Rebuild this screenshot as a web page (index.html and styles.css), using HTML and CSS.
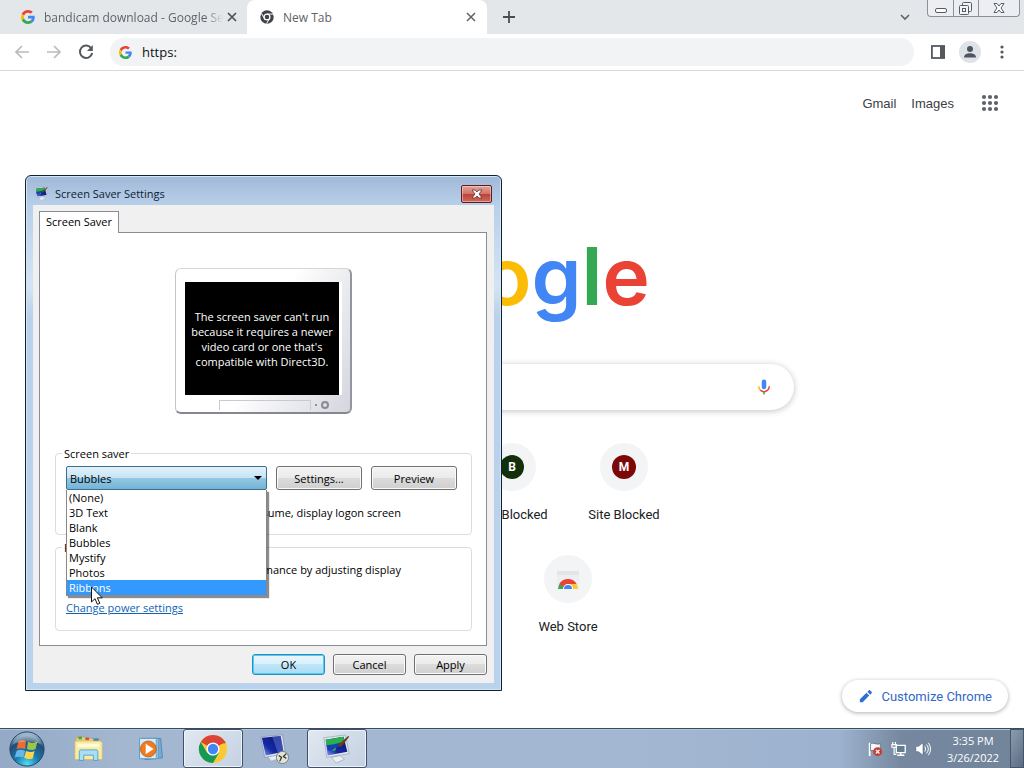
FILE: index.html
```html
<!DOCTYPE html>
<html lang="en">
<head>
<meta charset="utf-8">
<title>New Tab</title>
<link rel="stylesheet" href="styles.css">
</head>
<body>
<svg class="defs" aria-hidden="true">
  <defs>
    <symbol id="g-mark" viewBox="0 0 48 48">
      <path fill="#ea4335" d="M24 9.500c3.500 0 6.700 1.200 9.200 3.600l6.900-6.900C35.900 2.400 30.500 0 24 0 14.600 0 6.500 5.400 2.600 13.200l8 6.200C12.400 13.700 17.700 9.500 24 9.500z"/>
      <path fill="#4285f4" d="M47 24.500c0-1.600-.2-3.100-.4-4.500H24v9h12.900c-.6 3-2.300 5.500-4.800 7.200l7.700 6C44.400 38 47 31.800 47 24.500z"/>
      <path fill="#fbbc05" d="M10.500 28.600a14.500 14.500 0 0 1 0-9.200l-8-6.200a24 24 0 0 0 0 21.600z"/>
      <path fill="#34a853" d="M24 48c6.500 0 11.900-2.100 15.900-5.800l-7.700-6c-2.200 1.400-4.900 2.300-8.200 2.300-6.300 0-11.600-4.200-13.500-9.900l-8 6.200C6.500 42.600 14.600 48 24 48z"/>
    </symbol>
    <linearGradient id="blue-screen" x1="0" y1="1" x2="1" y2="0">
      <stop offset="0" stop-color="#8fa4ee"/><stop offset=".35" stop-color="#1529a8"/><stop offset="1" stop-color="#0b1560"/>
    </linearGradient>
    <symbol id="display" viewBox="0 0 32 32">
      <path d="M10 25l9-2 5 4-9 4z" fill="#e8edf4" stroke="#8b9ab0" stroke-width=".6"/>
      <path d="M2 4l23-3 4 20-24 4z" fill="#dfe6f0" stroke="#8793a8" stroke-width=".6"/>
      <path d="M4 6l19-3 4 16-21 4z" fill="url(#blue-screen)"/>
      <path d="M4 6l19-3 1 6-8 3-2 6-5-1 2-4-6 1z" fill="#28b24a"/>
      <path d="M5 12l8-1 7-2-3 4-8 5-3-1z" fill="#193dbb"/>
      <path d="M18 11l10-9 1 1-8 10-4 1z" fill="#6a3b1d"/>
    </symbol>
  </defs>
</svg>

<main class="browser">
  <header class="tab-strip">
    <div class="tab">
      <svg class="favicon" aria-hidden="true"><use href="#g-mark"/></svg>
      <span class="tab-title tab-title-fade">bandicam download - Google Search</span>
      <button class="icon-button tab-close" aria-label="Close tab"><svg viewBox="0 0 10 10"><path d="M1 1l8 8M9 1l-8 8" stroke="#4c5054" stroke-width="1.700"/></svg></button>
    </div>
    <div class="tab tab-active">
      <svg class="favicon" viewBox="0 0 24 24" aria-hidden="true">
        <circle cx="12" cy="12" r="11.500" fill="#3f4347"/>
        <circle cx="12" cy="12" r="5" fill="#3f4347" stroke="#fff" stroke-width="2.200"/>
        <path d="M12 7h10.500M7.600 14.500L2.400 5.600M16.400 14.500L11.300 23.400" stroke="#fff" stroke-width="1.700"/>
      </svg>
      <span class="tab-title">New Tab</span>
      <button class="icon-button tab-close" aria-label="Close tab"><svg viewBox="0 0 10 10"><path d="M1 1l8 8M9 1l-8 8" stroke="#5f6368" stroke-width="1.500"/></svg></button>
    </div>
    <button class="icon-button new-tab" aria-label="New tab"><svg viewBox="0 0 12 12"><path d="M6 0v12M0 6h12" stroke="#4a4e52" stroke-width="1.800"/></svg></button>
    <button class="icon-button tab-search" aria-label="Search tabs"><svg viewBox="0 0 12 12"><path d="M2 4l4 4 4-4" fill="none" stroke="#5f6368" stroke-width="1.600"/></svg></button>
    <div class="window-controls">
      <button aria-label="Minimize"><svg viewBox="0 0 24 16"><rect x="6.500" y="8.500" width="11" height="4" rx="1.500" fill="#fff" stroke="#555c66"/></svg></button>
      <button aria-label="Restore"><svg viewBox="0 0 24 16"><g fill="#f4f5f7" stroke="#555c66"><rect x="8.500" y="2.500" width="9" height="9" rx="1"/><rect x="5.500" y="5.500" width="9" height="9" rx="1"/><rect x="8.500" y="8.500" width="3" height="3"/></g></svg></button>
      <button class="wide" aria-label="Close"><svg viewBox="0 0 24 16"><path d="M7 3.500h3l2 2.500 2-2.500h3l-3 4.500 3 4.500h-3l-2-2.500-2 2.500H7l3-4.500z" fill="#fff" stroke="#555c66"/></svg></button>
    </div>
  </header>

  <nav class="toolbar" aria-label="Browser toolbar">
    <button class="icon-button" aria-label="Back"><svg viewBox="0 0 16 16"><path d="M15 8H2M8 2L2 8l6 6" fill="none" stroke="#b9bbbe" stroke-width="1.700"/></svg></button>
    <button class="icon-button" aria-label="Forward"><svg viewBox="0 0 16 16"><path d="M1 8h13M8 2l6 6-6 6" fill="none" stroke="#b9bbbe" stroke-width="1.700"/></svg></button>
    <button class="icon-button" aria-label="Reload"><svg viewBox="0 0 16 16"><path d="M13.300 4.300A6.200 6.200 0 1 0 14.200 9" fill="none" stroke="#55595e" stroke-width="2"/><path d="M14.800 1v6H9z" fill="#55595e"/></svg></button>
    <label class="omnibox">
      <svg class="favicon" aria-hidden="true"><use href="#g-mark"/></svg>
      <input type="text" value="https:" aria-label="Address">
    </label>
    <button class="icon-button" aria-label="Side panel"><svg viewBox="0 0 16 16"><rect x="1.900" y="2" width="12.200" height="12" fill="#fff" stroke="#55595e" stroke-width="1.800"/><path d="M10 2h4v12h-4z" fill="#55595e"/></svg></button>
    <button class="icon-button profile" aria-label="Profile"><svg viewBox="0 0 16 16"><circle cx="8" cy="5" r="3" fill="#4e5560"/><path d="M2 13.500c0-3 3-4.200 6-4.200s6 1.200 6 4.200z" fill="#4e5560"/></svg></button>
    <button class="icon-button" aria-label="Menu"><svg viewBox="0 0 16 16" fill="#55595e"><circle cx="8" cy="3" r="1.600"/><circle cx="8" cy="8" r="1.600"/><circle cx="8" cy="13" r="1.600"/></svg></button>
  </nav>

  <section class="page">
    <nav class="page-links" aria-label="Google services">
      <a href="#gmail">Gmail</a>
      <a href="#images">Images</a>
      <button class="icon-button apps" aria-label="Google apps"><svg viewBox="0 0 18 18" fill="#5f6368"><circle cx="3" cy="3" r="2.100"/><circle cx="9" cy="3" r="2.100"/><circle cx="15" cy="3" r="2.100"/><circle cx="3" cy="9" r="2.100"/><circle cx="9" cy="9" r="2.100"/><circle cx="15" cy="9" r="2.100"/><circle cx="3" cy="15" r="2.100"/><circle cx="9" cy="15" r="2.100"/><circle cx="15" cy="15" r="2.100"/></svg></button>
    </nav>
    <h1 class="logo"><span class="blue">G</span><span class="red">o</span><span class="yellow">o</span><span class="blue">g</span><span class="green">l</span><span class="red">e</span></h1>
    <div class="search">
      <input type="text" aria-label="Search">
      <button class="icon-button" aria-label="Search by voice"><svg viewBox="0 0 24 24"><rect x="9" y="2" width="6" height="13" rx="3" fill="#4285f4"/><path d="M5 11c0 2 .8 3.700 2 5" fill="none" stroke="#fbbc05" stroke-width="2"/><path d="M7 16c3 3 7 3 10 0 1.200-1.200 2-3 2-5" fill="none" stroke="#ea4335" stroke-width="2"/><path d="M12 18v4" stroke="#34a853" stroke-width="2"/></svg></button>
    </div>
    <div class="tiles">
      <div class="tile"><span class="tile-icon"></span></div>
      <a class="tile" href="#b"><span class="tile-icon"><b class="badge badge-green">B</b></span><span>Site Blocked</span></a>
      <a class="tile" href="#m"><span class="tile-icon"><b class="badge badge-red">M</b></span><span>Site Blocked</span></a>
      <div class="tile"><span class="tile-icon"></span></div>
      <a class="tile" href="#store"><span class="tile-icon"><svg class="store" viewBox="0 0 24 24" aria-hidden="true"><path d="M1 4h22v18H1z" fill="#eceef0"/><path d="M1 4h22v4H1z" fill="#e2e4e8"/><path d="M2 22a10 10 0 0 1 3-7l4 4-1 3z" fill="#34a853"/><path d="M3.300 17a10 10 0 0 1 17.400 0L12 18l-4 2z" fill="#ea4335"/><path d="M14 17h6.700a10 10 0 0 1 1.300 5h-6z" fill="#fbc934"/><path d="M7 22a5 5 0 0 1 10 0z" fill="#fff"/><path d="M8 22a4 4 0 0 1 8 0z" fill="#4285f4"/></svg></span><span>Web Store</span></a>
    </div>
    <button class="customize"><svg viewBox="0 0 16 16" aria-hidden="true"><path d="M2 14v-3l7-7 3 3-7 7zM10 3l1.500-1.500c.5-.5 1-.5 1.500 0L14.500 3c.5.500.5 1 0 1.500L13 6z" fill="#2f6ed3"/></svg>Customize Chrome</button>
  </section>
</main>

<section class="dialog" role="dialog" aria-labelledby="dialog-title">
  <header class="dialog-title">
    <svg class="dialog-icon" aria-hidden="true"><use href="#display"/></svg>
    <h2 id="dialog-title">Screen Saver Settings</h2>
    <button class="dialog-close" aria-label="Close"><svg viewBox="0 0 12 10"><path d="M1 1h3l2 2 2-2h3L8 5l3 4H8L6 7 4 9H1l3-4z" fill="#fff" stroke="#5c3535" stroke-width=".8"/></svg></button>
  </header>
  <div class="dialog-body">
    <button class="page-tab" role="tab" aria-selected="true">Screen Saver</button>
    <div class="tab-page">
      <div class="monitor">
        <p class="monitor-screen">The screen saver can't run because it requires a newer video card or one that's compatible with Direct3D.</p>
        <div class="monitor-base"><span class="monitor-ridge"></span><span class="monitor-led"></span><span class="monitor-power"></span></div>
      </div>
      <fieldset class="group">
        <legend>Screen saver</legend>
        <div class="saver-row">
          <div class="combo">
            <select aria-label="Screen saver"><option>Bubbles</option></select>
            <svg class="combo-arrow" viewBox="0 0 8 4" aria-hidden="true"><path d="M0 0h8L4 4z"/></svg>
            <ul class="combo-list" role="listbox" aria-label="Screen savers">
              <li role="option">(None)</li>
              <li role="option">3D Text</li>
              <li role="option">Blank</li>
              <li role="option">Bubbles</li>
              <li role="option">Mystify</li>
              <li role="option">Photos</li>
              <li role="option" class="selected" aria-selected="true">Ribbons</li>
            </ul>
            <svg class="pointer" viewBox="0 0 12 19" aria-hidden="true"><path d="M.5 1v15l3.500-3.300 2.400 5.600 2.400-1-2.400-5.500h4.900z" fill="#fff" stroke="#111"/></svg>
          </div>
          <button class="button">Settings...</button>
          <button class="button">Preview</button>
        </div>
        <p class="group-text">On resume, display logon screen</p>
      </fieldset>
      <fieldset class="group group-power">
        <legend>Power management</legend>
        <p class="group-text">Conserve energy or maximize performance by adjusting display</p>
        <a class="power-link" href="#power">Change power settings</a>
      </fieldset>
    </div>
    <footer class="dialog-actions">
      <button class="button button-default">OK</button>
      <button class="button">Cancel</button>
      <button class="button">Apply</button>
    </footer>
  </div>
</section>

<footer class="taskbar">
  <button class="task start" aria-label="Start">
    <svg viewBox="0 0 38 38"><defs><radialGradient id="orb" cx=".5" cy=".95" r=".9"><stop offset="0" stop-color="#4fe0f5"/><stop offset=".4" stop-color="#1878ac"/><stop offset=".75" stop-color="#234d74"/><stop offset="1" stop-color="#9dbace"/></radialGradient></defs>
      <circle cx="19" cy="19" r="18" fill="url(#orb)" stroke="#1e4263"/>
      <path d="M10 11c3-2 6-1 8 0l-1 8c-3-1-6-1-9 0z" fill="#ee6b32"/><path d="M20 11c3 2 6 2 10 0l-2 8c-3 2-6 1-9 0z" fill="#9ac54a"/><path d="M8 21c3-2 6-1 9 0l-2 7c-3-1-6-1-9 0z" fill="#67b6ec"/><path d="M18 21c3 1 6 2 9 0l-2 8c-3 1-6 1-9-1z" fill="#fcd34c"/>
      <path d="M4 14a16 16 0 0 1 30 0c-9-4-21-4-30 0z" fill="#fff" opacity=".25"/></svg>
  </button>
  <button class="task" aria-label="File Explorer">
    <svg viewBox="0 0 34 32"><path d="M2 4l3-2h6l2 2h15l2 3v21H2z" fill="#e9cf78" stroke="#b99a4a" stroke-width=".7"/><path d="M5 2h4v3H5z" fill="#3aa854"/><path d="M13 3h4v3h-4z" fill="#dc4d3a"/><path d="M22 4h6v3h-6z" fill="#4385ce"/><path d="M1 7h29l2 2v19H1z" fill="#f8eba6" stroke="#ccb464" stroke-width=".7"/><path d="M4 10h25v4H4z" fill="#fffbd8"/><path d="M6 29V19q0-2 2-2h17q2 0 2 2v10h-5v-6H11v6z" fill="#a9def5" stroke="#4b9fca"/></svg>
  </button>
  <button class="task" aria-label="Media Player">
    <svg viewBox="0 0 34 32"><path d="M8 4h20l2 22-20 2z" fill="#77a9d2" stroke="#4e86b5"/><path d="M6 4h19v23H6z" fill="#b6dbf0" stroke="#5897c0"/><path d="M4 4h19v23H4z" fill="#d3ecf8" stroke="#5897c0"/><circle cx="14" cy="16" r="9" fill="#ef7a22" stroke="#c95e13"/><path d="M11 10l9 6-9 6z" fill="#fff"/></svg>
  </button>
  <button class="task task-open" aria-label="Chrome">
    <svg viewBox="0 0 32 32"><circle cx="16" cy="16" r="15" fill="#fbc934"/><path d="M16 16L3 8.500a15 15 0 0 1 26 0z" fill="#db4437"/><path d="M3 8.500A15 15 0 0 0 16 31l6.500-11.300L9.500 19.700z" fill="#149a54"/><path d="M16 9h13.200" stroke="#db4437" stroke-width="2"/><circle cx="16" cy="16" r="7" fill="#fff"/><circle cx="16" cy="16" r="5.500" fill="#4285f4"/></svg>
  </button>
  <button class="task" aria-label="Remote Desktop">
    <svg viewBox="0 0 32 32"><path d="M8 24l9-2 4 4-9 3z" fill="#e9edf3" stroke="#8d9aad" stroke-width=".6"/><path d="M1 3l23-2 3 20-22 4z" fill="#dbe4f0" stroke="#7386a3" stroke-width=".6"/><path d="M2 4l20-2 3 17-19 4z" fill="url(#blue-screen)"/><path d="M13 3l9-1 3 17-6 1z" fill="#5d78df" opacity=".5"/><circle cx="24" cy="25" r="6.500" fill="#e2e3da" stroke="#777e74"/><path d="M20 23l3 2-2 4M28 21l-3 3 3 2" fill="none" stroke="#30372c" stroke-width="1.300"/></svg>
  </button>
  <button class="task task-open" aria-label="Screen Saver Settings">
    <svg aria-hidden="true"><use href="#display"/></svg>
  </button>
  <div class="tray">
    <svg viewBox="0 0 18 18" role="img" aria-label="Action Center"><path d="M3 2v15" stroke="#fff" stroke-width="2"/><path d="M4 3c4-2 6 2 11 0v8c-5 2-7-2-11 0z" fill="#f5f7fa" stroke="#4f5d70" stroke-width=".7"/><circle cx="12" cy="12" r="5" fill="#c93b32"/><path d="M10 10l4 4M14 10l-4 4" stroke="#fff" stroke-width="1.500"/></svg>
    <svg viewBox="0 0 18 18" role="img" aria-label="Network"><path d="M6 5h10v8H6z" fill="#637c92" stroke="#fff" stroke-width="1.500"/><path d="M11 13v3M7 16h8" stroke="#fff" stroke-width="1.500"/><path d="M2 1v3M5 1v3M1 4h5v3H1zM3.500 7v8H6" fill="none" stroke="#fff" stroke-width="1.300"/></svg>
    <svg viewBox="0 0 18 18" role="img" aria-label="Volume"><path d="M1 6h3l5-4v14l-5-4H1z" fill="#fff" stroke="#4f5d70" stroke-width=".6"/><path d="M11 6q2 3 0 6M13 4q4 5 0 10M15 2q5 7 0 14" fill="none" stroke="#fff" stroke-width="1.100"/></svg>
  </div>
  <div class="clock"><time>3:35 PM</time><time>3/26/2022</time></div>
  <button class="show-desktop" aria-label="Show desktop"></button>
</footer>
</body>
</html>
```

FILE: styles.css
```css
* { box-sizing: border-box; }

body {
  margin: 0;
  height: 100vh;
  display: flex;
  flex-direction: column;
  overflow: hidden;
  position: relative;
  font-family: "Open Sans", sans-serif;
  font-size: 12px;
  color: #111;
}

button, input, select { font: inherit; color: inherit; margin: 0; }
button { padding: 0; border: 0; background: none; }
p, h1, h2, ul { margin: 0; padding: 0; }
a { color: inherit; text-decoration: none; }
svg { display: block; }
.defs { position: absolute; width: 0; height: 0; }

.browser { flex: 1; display: flex; flex-direction: column; min-height: 0; background: #fff; }

/* Tab strip */
.tab-strip { height: 34px; display: flex; align-items: center; background: #e4e7ea; }
.tab { width: 247px; height: 34px; display: flex; align-items: center; padding: 0 10px 0 21px; color: #5f6368; }
.tab-active { width: 240px; padding: 0 11px 0 13px; background: #fff; border-radius: 8px 8px 0 0; }
.favicon { width: 14px; height: 14px; flex: none; }
.tab-title { flex: 1; margin-left: 9px; white-space: nowrap; overflow: hidden; }
.tab-title-fade { -webkit-mask-image: linear-gradient(90deg, #000 90%, transparent); mask-image: linear-gradient(90deg, #000 90%, transparent); }
.icon-button { display: grid; place-items: center; flex: none; width: 16px; height: 16px; }
.icon-button svg { width: 16px; height: 16px; }
.tab-close { margin-left: 4px; width: 10px; }
.tab-close svg { width: 10px; height: 10px; }
.new-tab { margin-left: 14px; }
.new-tab svg { width: 12px; height: 12px; }
.tab-search { margin-left: auto; margin-right: 14px; }
.tab-search svg { width: 12px; height: 12px; }
.window-controls { align-self: flex-start; display: flex; margin-right: 4px; border: 1px solid #8c929a; border-top: 0; border-radius: 0 0 4px 4px; background: #eceef1; }
.window-controls button { width: 25px; height: 16px; display: grid; place-items: center; }
.window-controls button + button { border-left: 1px solid #8c929a; }
.window-controls .wide { width: 41px; }
.window-controls svg { width: 24px; height: 16px; }

/* Toolbar */
.toolbar { height: 37px; display: flex; align-items: center; gap: 16px; padding: 0 14px; border-bottom: 1px solid #d8dadd; }
.omnibox { flex: 1; height: 28px; display: flex; align-items: center; gap: 10px; padding-left: 9px; border-radius: 14px; background: #f1f3f4; }
.omnibox .favicon { width: 13px; height: 13px; }
.omnibox input { flex: 1; min-width: 0; padding: 0; border: 0; background: none; outline: 0; font-size: 13px; }
.profile { width: 22px; height: 22px; margin: 0 -3px; border-radius: 50%; background: #dfe2e7; }

/* New tab page */
.page { flex: 1; display: flex; flex-direction: column; align-items: center; position: relative; font-family: Roboto, sans-serif; font-size: 13px; color: #202124; }
.page-links { align-self: stretch; display: flex; justify-content: flex-end; align-items: center; gap: 15px; padding: 21px 25px 0 0; font-family: "Liberation Sans", sans-serif; color: #3c4043; }
.apps { width: 18px; height: 22px; margin-left: 12px; }
.apps svg { width: 18px; height: 18px; }
.logo { height: 112px; margin-top: 106px; font-family: Inter, sans-serif; font-size: 80px; font-weight: 600; line-height: 112px; }
.blue { color: #4285f4; }
.red { color: #ea4335; }
.yellow { color: #fbbc05; }
.green { color: #34a853; }
.search { width: 55%; height: 46px; margin-top: 32px; display: flex; align-items: center; padding: 0 21px; border-radius: 23px; box-shadow: 0 1px 6px rgba(32, 33, 36, .28); }
.search input { flex: 1; min-width: 0; border: 0; outline: 0; background: none; }
.search .icon-button, .search svg { width: 18px; height: 20px; }
.tiles { width: 336px; display: flex; flex-wrap: wrap; justify-content: center; margin-top: 26px; }
.tile { width: 112px; height: 112px; padding-top: 7px; display: flex; flex-direction: column; align-items: center; gap: 16px; line-height: 16px; }
.tile-icon { width: 48px; height: 48px; display: grid; place-items: center; border-radius: 50%; background: #f3f4f5; }
.badge { width: 24px; height: 24px; border-radius: 50%; color: #fff; font-size: 12px; line-height: 24px; text-align: center; }
.badge-green { background: #12300b; }
.badge-red { background: #7d0808; }
.store { width: 24px; height: 24px; }
.customize { position: absolute; right: 16px; bottom: 16px; height: 32px; display: flex; align-items: center; gap: 8px; padding: 0 16px; border-radius: 16px; background: #fff; box-shadow: 0 1px 4px rgba(0, 0, 0, .32); color: #3367c6; }
.customize svg { width: 15px; height: 15px; }

/* Screen saver dialog */
.dialog { position: absolute; left: 25px; top: 175px; width: 477px; padding: 0 7px 7px; border: 1px solid #0d2235; border-radius: 6px 6px 0 0; background: linear-gradient(#a0b9d8, #b9d0ea 30px, #d4e4f4 110px, #b9d1ea 140px, #bad2eb); box-shadow: inset 0 0 0 1px #d4e5f6; font-size: 11px; line-height: 15px; color: #000; }
.dialog-title { height: 29px; display: flex; align-items: center; gap: 6px; padding: 6px 2px 0 1px; }
.dialog-icon { width: 15px; height: 15px; }
.dialog-title h2 { flex: 1; font-size: 11px; font-weight: 400; color: #0c1e35; }
.dialog-close { width: 31px; height: 18px; display: grid; place-items: center; border: 1px solid #5b1c22; border-radius: 2px; background: linear-gradient(#e6a095, #d07568 48%, #bd4034 50%, #cf6a5c); box-shadow: inset 0 0 0 1px rgba(255, 255, 255, .4); }
.dialog-close svg { width: 12px; height: 10px; }
.dialog-body { padding: 6px 7px 8px 6px; background: #f0f0f0; }
.page-tab { position: relative; display: block; width: 80px; height: 22px; margin-bottom: -1px; padding-bottom: 2px; border: 1px solid #898c95; border-bottom: 0; background: #fff; }
.tab-page { padding: 35px 14px 14px 15px; border: 1px solid #898c95; background: #fff; }
.monitor { width: 177px; height: 146px; margin: 0 auto; padding: 13px 11px 0 9px; border: solid; border-width: 1px 2px 2px 1px; border-color: #d5d6d8 #9396a0 #858891 #c3c5ca; border-radius: 6px; background: linear-gradient(115deg, #fff 50%, #d5d6de); }
.monitor-screen { height: 113px; display: grid; place-items: center; padding: 0 2px; background: #000; box-shadow: 3px 0 #fff; color: #fff; text-align: center; }
.monitor-base { display: flex; align-items: center; gap: 4px; padding: 5px 10px 0 34px; }
.monitor-ridge { flex: 1; height: 10px; border: 1px solid #c9cad0; border-bottom: 0; }
.monitor-led { width: 2px; height: 2px; background: #8f9299; }
.monitor-power { width: 8px; height: 8px; border: 2px solid #888b92; border-radius: 50%; }
.group { min-width: 0; margin: 32px 0 0; padding: 5px 15px 14px 10px; border: 1px solid #dcdcdc; border-radius: 4px; }
.group legend { margin-left: -4px; padding: 0 2px; }
.saver-row { display: flex; align-items: center; gap: 9px; }
.combo { position: relative; flex: none; width: 201px; height: 24px; }
.combo select { appearance: none; width: 100%; height: 24px; padding: 0 3px; border: 1px solid #3c6f8f; border-radius: 2px; background: linear-gradient(#e2f2fb, #c7e4f5 48%, #94c8e4 50%, #74b3d6); outline: 0; }
.combo-arrow { position: absolute; right: 5px; top: 10px; width: 8px; height: 4px; }
.combo-list { position: absolute; z-index: 2; left: 0; top: 24px; width: 201px; border: 1px solid #888; border-top: 0; background: #fff; box-shadow: 2px 2px 1px rgba(0, 0, 0, .45); list-style: none; }
.combo-list li { padding-left: 2px; line-height: 15px; }
.combo-list .selected { background: #3399ff; color: #fff; }
.pointer { position: absolute; z-index: 3; left: 25px; top: 120px; width: 12px; height: 19px; }
.button { flex: none; width: 86px; height: 24px; border: 1px solid #707070; border-radius: 3px; background: linear-gradient(#f3f3f3, #ebebeb 48%, #dcdcdc 50%, #cfcfcf); box-shadow: inset 0 0 0 1px #fafafa; }
.group-text { margin: 15px 55px 0 0; text-align: right; white-space: nowrap; }
.group-power { margin-top: 5px; padding-bottom: 15px; }
.group-power .group-text { margin-top: 2px; }
.power-link { display: block; margin-top: 23px; color: #0f63b5; text-decoration: underline; }
.dialog-actions { display: flex; justify-content: flex-end; gap: 8px; padding-top: 8px; }
.dialog-actions .button { width: 73px; height: 21px; }
.button-default { border-color: #2a8dbf; background: linear-gradient(#eaf6fc, #d9f0fb 48%, #bee6fa 50%, #abdcf3); box-shadow: inset 0 0 0 1px #4fcdf3; }

/* Taskbar */
.taskbar { height: 40px; display: flex; align-items: center; border-top: 1px solid #3b4b5f; background: linear-gradient(90deg, #93a9c5, #a3b7d1 12%, #a3b7d2 60%, #9db2ce 82%, #75889f 88%, #71849a); box-shadow: inset 0 1px #b6c5d8; }
.task { width: 60px; height: 39px; margin-right: 2px; display: grid; place-items: center; border: 1px solid transparent; border-radius: 3px; }
.task svg { width: 30px; height: 30px; }
.start { width: 54px; margin-right: 5px; }
.start svg { width: 36px; height: 36px; }
.task-open { border-color: #3e506a; background: linear-gradient(135deg, #e1e8f1, #c4d1e2); box-shadow: inset 0 0 0 1px #edf3f9; }
.tray { margin-left: auto; margin-right: 5px; display: flex; gap: 8px; }
.tray svg { width: 16px; height: 16px; }
.clock { width: 74px; display: flex; flex-direction: column; align-items: center; font-size: 11px; line-height: 17px; color: #fff; }
.show-desktop { width: 14px; height: 39px; border: 1px solid #46556a; background: linear-gradient(120deg, #8b9caf, #5b6d83); }
```
